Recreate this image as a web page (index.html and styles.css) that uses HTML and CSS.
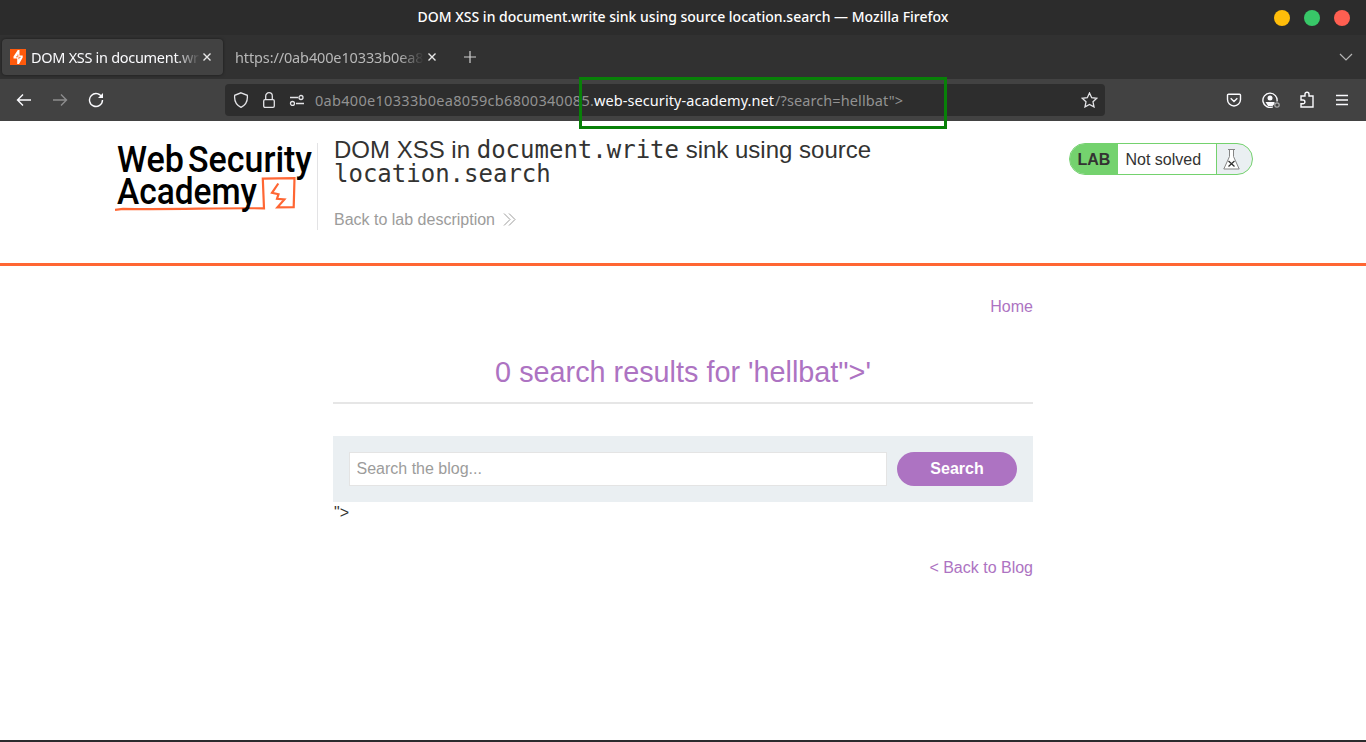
FILE: index.html
```html
<!DOCTYPE html>
<html lang="en">
<head>
<meta charset="utf-8">
<title>DOM XSS in document.write sink using source location.search</title>
<link rel="stylesheet" href="styles.css">
</head>
<body>
<div class="window">
  <div class="titlebar">
    <span class="window-title">DOM XSS in document.write sink using source location.search — Mozilla Firefox</span>
    <div class="window-buttons"><i class="dot yellow"></i><i class="dot green"></i><i class="dot red"></i></div>
  </div>
  <div class="tabbar">
    <div class="tab active">
      <svg class="favicon" width="16" height="16" viewBox="0 0 16 16"><rect width="16" height="16" fill="#ff5a0c"/><path d="M7.800 1H9.500v5.500h3.200v2L9 15H7.200V9.600H3.500v-2z" fill="#fff"/><path d="M7.900 5.500v2.300H6M8.900 10.200V8.300h1.800" stroke="#ff5a0c" stroke-width=".8"/></svg>
      <span class="tab-label first">DOM XSS in document.wri</span>
      <svg class="close" width="8" height="8" viewBox="0 0 8 8"><path d="M.5.5l7 7M7.5.5l-7 7"/></svg>
    </div>
    <div class="tab second">
      <span class="tab-label other">https://0ab400e10333b0ea8</span>
      <svg class="close" width="8" height="8" viewBox="0 0 8 8"><path d="M.5.5l7 7M7.5.5l-7 7"/></svg>
    </div>
    <svg class="plus" width="12" height="12" viewBox="0 0 12 12"><path d="M6 0v12M0 6h12"/></svg>
    <svg class="all-tabs" width="14" height="8" viewBox="0 0 14 8"><path d="M1 1l6 6 6-6"/></svg>
  </div>
  <div class="toolbar">
    <div class="nav">
      <svg width="16" height="16" viewBox="0 0 16 16"><path d="M15 8H1.5M7 2.5L1.5 8 7 13.5"/></svg>
      <svg class="dim" width="16" height="16" viewBox="0 0 16 16"><path d="M1 8h13.5M9 2.5L14.500 8 9 13.500"/></svg>
      <svg width="16" height="16" viewBox="0 0 16 16"><path d="M14 5.500A6.500 6.500 0 1 0 14.500 8"/><path d="M15 1v5h-5z" fill="#fbfbfe" stroke="none"/></svg>
    </div>
    <div class="urlbar">
      <svg width="16" height="16" viewBox="0 0 16 16"><path d="M8 .8L14.300 3.300c.6 5.200-1.400 9.500-6.300 12-4.900-2.500-6.900-6.800-6.300-12z"/></svg>
      <svg class="lock" width="14" height="16" viewBox="0 0 14 16"><rect x="1.700" y="7.600" width="10.600" height="7.700" rx="1.300"/><path d="M3.700 7.500V4a3.300 3.300 0 0 1 6.600 0v3.500"/></svg>
      <svg class="perm" width="16" height="12" viewBox="0 0 16 12"><path d="M1 3.500h8M7 9.500h8"/><circle cx="12" cy="3.500" r="2"/><circle cx="3.500" cy="9.500" r="2"/></svg>
      <div class="address"><span class="sub">0ab400e10333b0ea8059cb6800340085.</span><span class="domain">web-security-academy.net</span><span class="path">/?search=hellbat"&gt;</span></div>
      <svg class="star" width="17" height="16" viewBox="0 0 17 16"><path d="M8.500 1l2.200 4.700 5.100.6-3.800 3.500 1 5.100-4.500-2.500L4 14.900l1-5.100-3.800-3.500 5.100-.6z"/></svg>
    </div>
    <div class="actions">
      <svg width="16" height="16" viewBox="0 0 16 16"><path d="M2.500 2.200h11a1 1 0 0 1 1 1v4.300a6.500 6.500 0 0 1-13 0V3.200a1 1 0 0 1 1-1zM4.700 6.200L8 9.400l3.300-3.200"/></svg>
      <svg width="18" height="16" viewBox="0 0 18 16"><path d="M10.800 14.800A7.100 7.100 0 1 1 15 9.500"/><circle cx="8" cy="6" r="2.500" fill="#fbfbfe" stroke="none"/><path d="M3.500 10h9v2l-2 2H6z" fill="#fbfbfe" stroke="none"/><circle class="status" cx="15" cy="13" r="2.200"/></svg>
      <svg width="16" height="18" viewBox="0 0 16 18"><path d="M2 7V5h4V3.200a2 2 0 0 1 4 0V5h4v11H2v-3.200h2a1.900 1.900 0 0 0 0-3.800H2z"/></svg>
      <svg width="14" height="12" viewBox="0 0 14 12"><path d="M1 1.500h12M1 6h12M1 10.500h12"/></svg>
    </div>
    <div class="highlight"></div>
  </div>

  <div class="page">
    <header class="lab-header">
      <div class="logo">
        <svg width="203" height="78" viewBox="0 0 203 78">
          <g class="logo-text"><text x="2" y="32.500" textLength="67" lengthAdjust="spacingAndGlyphs">Web</text><text x="73" y="32.500" textLength="124" lengthAdjust="spacingAndGlyphs">Security</text></g>
          <path d="M0 70.800L8 69.800C55 70.800 100 68.800 149 69.300L147.800 39.700l31.700-.5-.8 29-16.300.2 7-8-7.400-.6 1.500-4.600-6.500-1.400 6.300-9.300" fill="none" stroke="#ff6633" stroke-width="2.200"/>
          <g class="logo-text"><text x="2" y="65" textLength="140" lengthAdjust="spacingAndGlyphs">Academy</text></g>
        </svg>
      </div>
      <div class="lab-title">
        <h2>DOM XSS in <code>document.write</code> sink using source <code>location.search</code></h2>
        <a>Back to lab description<svg width="13" height="13" viewBox="0 0 13 13"><path d="M1 .5l6 6-6 6M6 .5l6 6-6 6"/></svg></a>
      </div>
      <div class="badge">
        <b>LAB</b><span>Not solved</span>
        <i><svg width="17" height="21" viewBox="0 0 17 21"><path class="glass" d="M5 .5h7M6.500 1v6.500L.8 20h15.400L10.500 7.500V1"/><path class="cross" d="M5.500 12l6 5.500M11.500 12l-6 5.500"/></svg></i>
      </div>
    </header>
    <main class="blog">
      <nav><a>Home</a></nav>
      <h1>0 search results for 'hellbat"&gt;'</h1>
      <form class="search"><input type="text" placeholder="Search the blog..."><button type="button">Search</button></form>
      <div class="leftover">"&gt;</div>
      <div class="back"><a>&lt; Back to Blog</a></div>
    </main>
  </div>
</div>
</body>
</html>
```
FILE: styles.css
```css
* { box-sizing: border-box; }
body { margin: 0; font: 16px/1 "Liberation Sans", Arial, sans-serif; color: #333332; }
svg { display: block; flex: none; fill: none; }
.window { height: 742px; display: flex; flex-direction: column; overflow: hidden; border-bottom: 2px solid #2b2b2d; }

.titlebar, .tabbar, .toolbar { font-family: "Noto Sans", sans-serif; flex: none; white-space: nowrap; }
.titlebar { height: 35px; background: #2c2c2c; display: grid; grid-template-columns: 1fr auto 1fr; align-items: center; }
.window-title { grid-column: 2; color: #fff; font-size: 14px; font-weight: 500; line-height: 20px; padding-bottom: 1px; }
.window-buttons { display: flex; gap: 14px; justify-content: flex-end; padding-right: 16px; }
.dot { width: 16px; height: 16px; border-radius: 50%; }
.yellow { background: #ffbd0a; }
.green { background: #38c768; }
.red { background: #ff5f51; }

.tabbar { height: 44px; background: #313131; display: flex; align-items: center; padding: 0 13px 0 2px; font-size: 14.5px; color: #fbfbfe; }
.tab { height: 36px; display: flex; align-items: center; }
.active { width: 221px; padding-left: 8px; background: #424242; border-radius: 4px; box-shadow: 0 0 3px rgba(0,0,0,.5); }
.tab-label { overflow: hidden; line-height: 22px; -webkit-mask-image: linear-gradient(to left, transparent, #000 25px); mask-image: linear-gradient(to left, transparent, #000 25px); }
.first { width: 169px; margin: 0 3px 0 5px; letter-spacing: -.3px; }
.second { padding-left: 12px; color: #b8b8b8; }
.other { width: 189px; margin-right: 4px; letter-spacing: -.13px; }
.close { stroke: #e8e8e8; stroke-width: 1.4; margin-top: -1px; }
.plus { stroke: #d0d0d0; stroke-width: 1.2; margin-left: 28px; }
.all-tabs { stroke: #b5b5b5; stroke-width: 1.2; margin-left: auto; }

.toolbar { height: 42px; background: #424242; display: flex; align-items: center; position: relative; stroke: #fbfbfe; stroke-width: 1.4; }
.nav { width: 225px; padding-left: 16px; display: flex; gap: 20px; }
.dim { opacity: .4; }
.urlbar { width: 880px; height: 32px; background: #2d2d2d; border-radius: 4px; display: flex; align-items: center; padding: 0 7px 0 8px; stroke: #e4e4e7; stroke-width: 1.3; }
.lock { margin-left: 13px; }
.perm { margin-left: 13px; }
.address { margin-left: 10px; font-size: 14.5px; color: #929292; line-height: 22px; display: flex; }
.sub { width: 279px; letter-spacing: .3px; }
.domain { width: 181px; color: #fbfbfe; letter-spacing: .08px; }
.path { letter-spacing: .1px; }
.star { margin-left: auto; }
.actions { flex: 1; padding: 0 17px 0 0; display: flex; justify-content: flex-end; align-items: center; gap: 20px; }
.actions svg:nth-child(2) { margin-right: -1px; }
.status { stroke: #a9a9a9; stroke-width: 1.2; }
.highlight { position: absolute; left: 579px; top: -2px; width: 368px; height: 52px; border: 3px solid #088008; z-index: 2; }

.page { flex: 1; background: #fff; }
.lab-header { height: 145px; border-bottom: 3px solid #ff6633; padding: 22px 113px 0 115px; display: flex; align-items: flex-start; }
.logo { width: 203px; height: 87px; border-right: 1px solid #e3e3e5; }
.logo svg { margin-top: -4px; }
.logo-text { font-family: Roboto, sans-serif; font-size: 37px; font-weight: 500; fill: #000; }
.lab-title { width: 600px; padding-left: 16px; margin-top: -5px; }
.lab-title h2 { margin: 0; font-size: 24px; line-height: 24px; font-weight: 400; }
code { font-family: "DejaVu Sans Mono", monospace; font-size: 24px; line-height: 24px; }
.lab-title a { display: flex; align-items: center; gap: 8px; color: #9c9c9b; margin-top: 25px; line-height: 18px; }
.lab-title svg { stroke: #9c9c9b; stroke-width: 1; margin-top: -1px; }
.badge { margin-left: auto; width: 184px; height: 32px; display: flex; border: 1px solid #74d26e; border-radius: 16px; overflow: hidden; line-height: 32px; background: #eaeff2; }
.badge b { width: 48px; background: #74d26e; padding-left: 7.500px; }
.badge span { width: 99px; background: #fff; padding-left: 7.500px; border-right: 1px solid #74d26e; }
.badge i { padding: 5px 0 0 6px; }
.glass { stroke: #858585; fill: #fff; }
.cross { stroke: #333; stroke-width: 1.3; }

.blog { width: 700px; margin: 0 auto; padding-top: 32px; }
.blog a { color: #ad73c2; }
.blog nav, .back { text-align: right; line-height: 18px; }
.blog h1 { margin: 40px 0 32px; height: 48px; border-bottom: 2px solid #e6e6e6; text-align: center; color: #ad73c2; font-size: 28.8px; font-weight: 400; line-height: 33px; }
.search { height: 66px; padding: 16px; background: #eaeff2; display: flex; gap: 10px; }
.search input { flex: 1; border: 1px solid #e4e4e4; padding: 0 6.500px; font: inherit; background: #fff; outline: 0; }
.search input::placeholder { color: #9c9c9b; opacity: 1; }
.search button { width: 120px; border: 0; border-radius: 17px; background: #ad73c2; color: #fff; font: inherit; font-weight: 700; }
.leftover { line-height: 18px; padding: 2px 0 0 1px; }
.back { margin-top: 37px; }
```
